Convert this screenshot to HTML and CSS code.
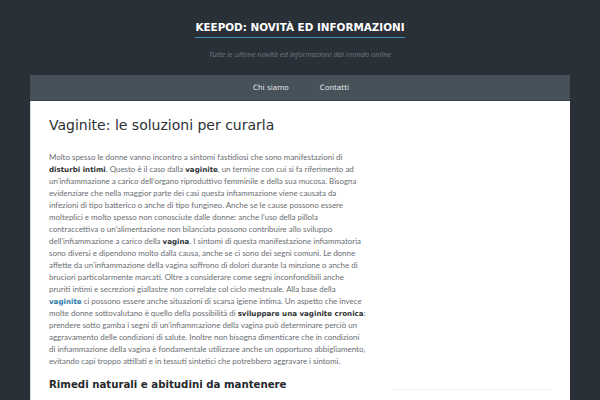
FILE: index.html
```html
<!DOCTYPE html>
<html lang="it">
<head>
<meta charset="utf-8">
<title>Keepod</title>
<link rel="stylesheet" href="styles.css">
</head>
<body>
<header class="site-header">
  <h1 class="site-title">KEEPOD: NOVITÀ ED INFORMAZIONI</h1>
  <p class="site-desc">Tutte le ultime novità ed informazioni dal mondo online</p>
</header>
<div class="container">
  <nav class="nav">
    <a href="#">Chi siamo</a>
    <a href="#">Contatti</a>
  </nav>
  <div class="main">
    <article class="post">
      <h2 class="post-title">Vaginite: le soluzioni per curarla</h2>
      <p class="text">Molto spesso le donne vanno incontro a sintomi fastidiosi che sono manifestazioni di<br>
<strong>disturbi intimi</strong>. Questo è il caso dalla <strong>vaginite</strong>, un termine con cui si fa riferimento ad<br>
un’infiammazione a carico dell’organo riproduttivo femminile e della sua mucosa. Bisogna<br>
evidenziare che nella maggior parte dei casi questa infiammazione viene causata da<br>
infezioni di tipo batterico o anche di tipo fungineo. Anche se le cause possono essere<br>
molteplici e molto spesso non conosciute dalle donne: anche l’uso della pillola<br>
contraccettiva o un’alimentazione non bilanciata possono contribuire allo sviluppo<br>
dell’infiammazione a carico della <strong>vagina</strong>. I sintomi di questa manifestazione infiammatoria<br>
sono diversi e dipendono molto dalla causa, anche se ci sono dei segni comuni. Le donne<br>
affette da un’infiammazione della vagina soffrono di dolori durante la minzione o anche di<br>
bruciori particolarmente marcati. Oltre a considerare come segni inconfondibili anche<br>
pruriti intimi e secrezioni giallastre non correlate col ciclo mestruale. Alla base della<br>
<a class="link" href="#">vaginite</a> ci possono essere anche situazioni di scarsa igiene intima. Un aspetto che invece<br>
molte donne sottovalutano è quello della possibilità di <strong>sviluppare una vaginite cronica</strong>:<br>
prendere sotto gamba i segni di un’infiammazione della vagina può determinare perciò un<br>
aggravamento delle condizioni di salute. Inoltre non bisogna dimenticare che in condizioni<br>
di infiammazione della vagina è fondamentale utilizzare anche un opportuno abbigliamento,<br>
evitando capi troppo attillati e in tessuti sintetici che potrebbero aggravare i sintomi.</p>
      <h3 class="sub">Rimedi naturali e abitudini da mantenere</h3>
    </article>
    <aside class="sidebar">
      <div class="widget"></div>
    </aside>
  </div>
</div>
</body>
</html>
```

FILE: styles.css
```css
html, body {
  margin: 0;
  padding: 0;
}
body {
  background: #2a3038;
  font-family: "DejaVu Sans", sans-serif;
  height: 400px;
  overflow: hidden;
}
.site-header {
  text-align: center;
  padding-top: 20px;
  height: 75px;
  box-sizing: border-box;
}
.site-title {
  display: inline-block;
  vertical-align: top;
  margin: 0;
  font-size: 10.4px;
  line-height: 14px;
  font-weight: bold;
  color: #ffffff;
  padding-bottom: 3px;
  border-bottom: 1px solid #3d8fb5;
}
.site-desc {
  margin: 10px 0 0;
  font-family: "Open Sans", sans-serif;
  font-style: italic;
  font-size: 7.45px;
  line-height: 10px;
  color: #737980;
}
.container {
  margin: 0 30px;
}
.nav {
  height: 25px;
  background: #465159;
  border-bottom: 1px solid #3a434a;
  display: flex;
  justify-content: center;
  gap: 31px;
  padding-left: 2px;
}
.nav a {
  color: #e4e8ea;
  text-decoration: none;
  font-size: 7.3px;
  line-height: 25px;
}
.main {
  background: #ffffff;
  display: flex;
  height: 299px;
  overflow: hidden;
  border-left: 1px solid #d8dcdf;
}
.post {
  padding-left: 18px;
  width: 330px;
}
.post-title {
  margin: 15px 0 0;
  font-weight: normal;
  font-size: 14px;
  line-height: 18px;
  color: #2b2f33;
}
.text {
  margin: 17px 0 0;
  font-family: Lato, sans-serif;
  font-size: 7.95px;
  line-height: 12px;
  color: #6a6e72;
  white-space: nowrap;
}
.text strong {
  font-family: "DejaVu Sans", sans-serif;
  font-size: 7.1px;
  line-height: 8px;
  color: #2f3336;
}
.link {
  font-family: "DejaVu Sans", sans-serif;
  font-size: 7.1px;
  line-height: 8px;
  font-weight: bold;
  color: #2c7aa8;
  text-decoration: none;
}
.sub {
  margin: 11px 0 0;
  font-size: 10.2px;
  line-height: 14px;
  font-weight: bold;
  color: #25292c;
}
.sidebar {
  margin-left: 13px;
  width: 160px;
  padding-top: 288px;
}
.widget {
  border-top: 1px solid #f0f0f0;
}
```
